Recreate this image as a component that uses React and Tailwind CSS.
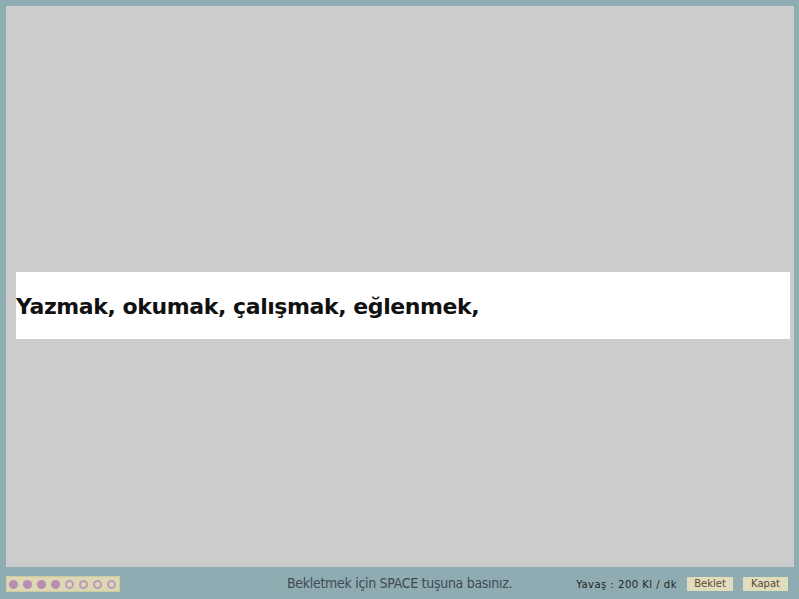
import React from "react";

export default function App() {
  const dots = [1, 1, 1, 1, 0, 0, 0, 0];
  return (
    <div className="w-[799px] h-[599px] bg-[#8eacb2] flex flex-col overflow-hidden">
      <div className="ml-[6px] mt-[6px] w-[788px] h-[561px] bg-[#cccccc] pt-[266px]">
        <div className="ml-[10px] w-[774px] h-[67px] bg-white flex items-center">
          <span
            className="text-[22px] font-bold text-[#111111] leading-none mt-[2px]"
            style={{ fontFamily: "'DejaVu Sans', Verdana, sans-serif", letterSpacing: "-0.42px" }}
          >
            Yazmak, okumak, çalışmak, eğlenmek,
          </span>
        </div>
      </div>
      <div className="relative flex-1 flex items-center">
        <div className="ml-[6px] mt-[2px] w-[114px] h-[16px] bg-[#ddd8b4] border border-[#d0caa0] flex items-center gap-[5px] pl-[2px]">
          {dots.map((f, i) => (
            <span
              key={i}
              className={
                f
                  ? "w-[9px] h-[9px] rounded-full bg-[#b88db4]"
                  : "w-[9px] h-[9px] rounded-full border-2 border-[#c09abb]"
              }
            />
          ))}
        </div>
        <div
          className="absolute left-[287px] top-[6px] text-[14px] text-[#3f4a52]"
          style={{ fontFamily: "'DejaVu Sans Condensed', 'DejaVu Sans', sans-serif", letterSpacing: "-0.3px" }}
        >
          Bekletmek için SPACE tuşuna basınız.
        </div>
        <div className="ml-auto mr-[11px] mt-[2px] flex items-center">
          <span
            className="text-[10px] text-[#1e2428] tracking-[0.5px] mr-[10px]"
            style={{ fontFamily: "'DejaVu Sans', Verdana, sans-serif" }}
          >
            Yavaş : 200 Kl / dk
          </span>
          <span
            className="w-[46px] h-[14px] bg-[#e0dcbc] text-[10px] text-[#5b4a38] flex items-center justify-center leading-none"
            style={{ fontFamily: "'DejaVu Sans', Verdana, sans-serif" }}
          >
            Beklet
          </span>
          <span
            className="ml-[10px] w-[45px] h-[14px] bg-[#e0dcbc] text-[10px] text-[#5b4a38] flex items-center justify-center leading-none"
            style={{ fontFamily: "'DejaVu Sans', Verdana, sans-serif" }}
          >
            Kapat
          </span>
        </div>
      </div>
    </div>
  );
}
